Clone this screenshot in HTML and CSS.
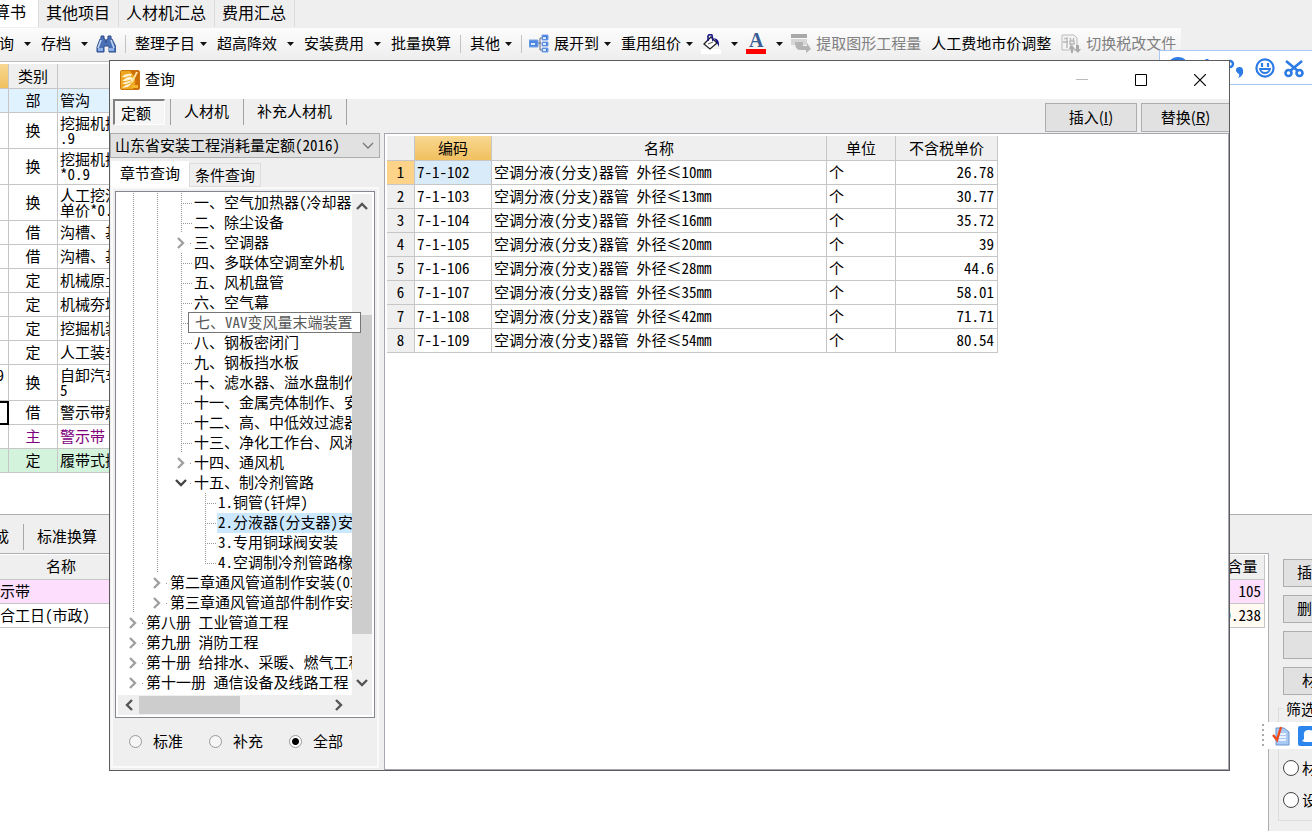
FILE: index.html
```
<!DOCTYPE html>
<html lang="zh-CN">
<head>
<meta charset="utf-8">
<title>查询</title>
<link rel="stylesheet" href="styles.css">
</head>
<body>
<svg class="defs" aria-hidden="true">
  <symbol id="caret" viewBox="0 0 7 4"><path d="M0 0h7L3.5 4z" fill="#111"/></symbol>
  <symbol id="chev" viewBox="0 0 12 12"><path d="M3 1l5 5-5 5" fill="none" stroke="currentColor" stroke-width="2.4"/></symbol>
</svg>
<div class="app">
  <nav class="tabs">
    <button class="tab tab-on">预算书</button>
    <button class="tab">其他项目</button>
    <button class="tab">人材机汇总</button>
    <button class="tab">费用汇总</button>
  </nav>
  <div class="toolbar">
    <button class="tool tool-cut wide"><span>查询</span><svg class="caret"><use href="#caret"/></svg></button>
    <button class="tool wide"><span>存档</span><svg class="caret"><use href="#caret"/></svg></button>
    <button class="tool bare" aria-label="查找"><svg class="ico" viewBox="0 0 20 20"><path d="M4 5h1V2h3v3h1l1 4 1-4h1V2h3v3h1l4 8v5h-7v-6H8v6H1v-5z" fill="#4a70b6" stroke="#2c4c8c"/><path d="M5 6l-3 8M15 6l3 8" stroke="#c3d5f3" stroke-width="1.6"/><path d="M2 14h5v3H2zM13 14h5v3h-5z" fill="#8fb0e6"/></svg></button>
    <i class="sep"></i>
    <button class="tool"><span>整理子目</span><svg class="caret"><use href="#caret"/></svg></button>
    <button class="tool wide"><span>超高降效</span><svg class="caret"><use href="#caret"/></svg></button>
    <button class="tool wide"><span>安装费用</span><svg class="caret"><use href="#caret"/></svg></button>
    <button class="tool"><span>批量换算</span></button>
    <i class="sep"></i>
    <button class="tool"><span>其他</span><svg class="caret"><use href="#caret"/></svg></button>
    <i class="sep"></i>
    <button class="tool bare"><svg class="ico" viewBox="0 0 20 20"><path d="M8 9h4M11 4v12M11 4h3M11 16h3" stroke="#667" fill="none"/><path d="M0 6h9v7H0z" fill="#4c86e0" stroke="#7aa5ea"/><path d="M13 1h6v5h-6zM13 8h6v4h-6zM13 14h6v4h-6z" fill="#3f78d8" stroke="#7aa5ea"/><path d="M2 9h4v2H2zM14 3h3v2h-3zM14 9h3v2h-3zM14 15h3v2h-3z" fill="#dceaff"/></svg><span>展开到</span><svg class="caret"><use href="#caret"/></svg></button>
    <button class="tool"><span>重用组价</span><svg class="caret"><use href="#caret"/></svg></button>
    <button class="tool wide bare" aria-label="填充颜色"><svg class="ico" viewBox="0 0 20 20"><path d="M0 15h20v5H0z" fill="#fff"/><path d="M10 3l6 6-7 6-6-5z" fill="#fff" stroke="#222" stroke-width="1.3"/><path d="M7 7V2q1-2 4-1l1 6" fill="none" stroke="#1a1a8c" stroke-width="1.6"/><path d="M13 4q6 1 5 9l-2-4z" fill="#10108a"/><path d="M7 10l5-2" stroke="#555"/></svg><svg class="caret"><use href="#caret"/></svg></button>
    <button class="tool wide bare" aria-label="字体颜色"><span class="letter">A</span><svg class="caret"><use href="#caret"/></svg></button>
    <button class="tool bare" disabled><svg class="ico" viewBox="0 0 20 20"><path d="M0 0h16v4H0z" fill="#a9a9a9"/><path d="M0 5h16v6H0z" fill="#d6d6d6"/><path d="M4 8h8v4h4V9l4 6-5 4v-3H9q-5 0-5-8z" fill="#b4b4b4"/></svg><span>提取图形工程量</span></button>
    <button class="tool"><span>人工费地市价调整</span></button>
    <button class="tool" disabled><svg class="ico" viewBox="0 0 20 20"><path d="M1 1h12l3 3v12H1z" fill="#f4f4f4" stroke="#bbb"/><path d="M3 5l3-1v10M2 8h5M9 4l1 2M13 4l-1 2M9 7h4v3H9zM10 10l-1 5" fill="none" stroke="#b5b5b5" stroke-width="1.300"/><path d="M10 19v-4H8l3-4 3 4h-2v4zM15 11h3v4h2l-3 4-4-4h2z" fill="#aaa"/></svg><span>切换税改文件</span></button>
  </div>

  <main class="sheet">
    <table class="grid list">
      <colgroup><col class="c-code"><col class="c-kind"><col class="c-name"></colgroup>
      <thead><tr><th class="gold"></th><th>类别</th><th></th></tr></thead>
      <tbody>
        <tr class="blue"><td></td><td>部</td><td>管沟</td></tr>
        <tr class="tall"><td></td><td>换</td><td>挖掘机挖沟槽<br>.9</td></tr>
        <tr class="tall"><td></td><td>换</td><td>挖掘机挖沟槽<br>*0.9</td></tr>
        <tr class="tall"><td></td><td>换</td><td>人工挖沟槽<br>单价*0.9</td></tr>
        <tr><td></td><td>借</td><td>沟槽、基坑</td></tr>
        <tr><td></td><td>借</td><td>沟槽、基坑</td></tr>
        <tr><td></td><td>定</td><td>机械原土夯实</td></tr>
        <tr><td></td><td>定</td><td>机械夯填</td></tr>
        <tr><td></td><td>定</td><td>挖掘机装车</td></tr>
        <tr><td></td><td>定</td><td>人工装车</td></tr>
        <tr class="tall"><td class="code"><span>9</span><br>&nbsp;</td><td>换</td><td>自卸汽车运土<br>5</td></tr>
        <tr><td class="focus"></td><td>借</td><td>警示带敷设</td></tr>
        <tr class="purple"><td></td><td>主</td><td>警示带</td></tr>
        <tr class="green"><td></td><td>定</td><td>履带式挖掘机</td></tr>
      </tbody>
    </table>
  </main>

  <section class="lower">
    <div class="detail">
      <nav class="subtabs"><button class="subtab subtab-cut">组成</button><button class="subtab">标准换算</button></nav>
      <div class="detail-box">
        <table class="grid parts">
          <colgroup><col class="c-part"><col><col class="c-qty"></colgroup>
          <thead><tr><th>名称</th><th></th><th>含量</th></tr></thead>
          <tbody>
            <tr class="pink"><td><span class="from-left">警示带</span></td><td></td><td class="num">105</td></tr>
            <tr class="cream"><td><span class="from-left">综合工日(市政)</span></td><td></td><td class="num">0.238</td></tr>
          </tbody>
        </table>
      </div>
    </div>
    <aside class="side">
      <button class="push">插入</button>
      <button class="push">删除</button>
      <button class="push" aria-label="查询"></button>
      <button class="push push-in">材料</button>
      <fieldset class="filter">
        <legend>筛选</legend>
        <label><input type="radio" name="f" class="big-radio">材料</label>
        <label><input type="radio" name="f" class="big-radio">设备</label>
      </fieldset>
    </aside>
  </section>
</div>

<div class="ime">
  <svg class="ime-logo" viewBox="0 0 24 24"><circle cx="12" cy="12" r="12" fill="#2d7be5"/></svg>
  <svg class="ime-ico" viewBox="0 0 22 22"><path d="M11 2v8" stroke="#2d7be5" stroke-width="3"/></svg>
  <svg class="ime-ico" viewBox="0 0 22 22"><circle cx="5" cy="7" r="3" fill="none" stroke="#2d7be5" stroke-width="2.400"/><path d="M11 14a3.500 3.500 0 1 1 7-1q1 6-5 8 2-2 1-4-2-1-3-3z" fill="#2d7be5"/></svg>
  <svg class="ime-ico" viewBox="0 0 22 22"><circle cx="11" cy="11" r="8.600" fill="none" stroke="#2d7be5" stroke-width="2.200"/><path d="M8 6v4M14 6v4" stroke="#2d7be5" stroke-width="2.200"/><path d="M6 12h10q-1 4-5 4t-5-4z" fill="none" stroke="#2d7be5" stroke-width="1.800"/></svg>
  <svg class="ime-ico" viewBox="0 0 22 22"><g fill="none" stroke="#2d7be5" stroke-width="2.600"><path d="M3 4l12 10M19 4L7 14"/><circle cx="5.500" cy="16" r="3"/><circle cx="16.500" cy="16" r="3"/></g></svg>
</div>

<div class="float">
  <i class="grip"></i>
  <svg class="float-ico" viewBox="0 0 20 20"><path d="M5 2h8l5 4v13H5z" fill="#a9c9f5" stroke="#6b93cf"/><path d="M8 8h7M8 11h7M8 14h7" stroke="#fff" stroke-width="1.500"/><path d="M2 9l4 5 4-13" fill="none" stroke="#f04a1c" stroke-width="2.400"/></svg>
  <svg class="float-ico" viewBox="0 0 20 20"><rect width="20" height="20" rx="2" fill="#2d86ee"/><path d="M6 10q-1-6 5-6t6 6v3l1 2-3 1H7l-3-1 2-2z" fill="#fff"/></svg>
</div>

<div class="dialog" role="dialog" aria-label="查询">
  <header class="title">
    <svg class="title-ico" viewBox="0 0 20 20"><rect x=".5" y=".5" width="19" height="19" rx="1.500" fill="#eda61e" stroke="#c8780a"/><path d="M10 1h9v18h-6q6-9-3-18z" fill="#cf6d08"/><path d="M2 7q3-4 10-3l-2 3 3 1-1 3-2 1 1 2-3 3-6 1q3-2 4-4H2l4-3H2l4-3z" fill="#fff3cf"/><path d="M4 8l6-2M4 12l7-2M5 15l5-2" stroke="#f0a830"/><path d="M18 2l-5 10-2 2 1-4 4-8z" fill="#ffe9a8"/><path d="M12 15h6v3h-6z" fill="#f5b62e"/></svg>
    <h1>查询</h1>
    <button class="win" aria-label="最小化"><svg viewBox="0 0 12 12"><path d="M0 5.500h12" stroke="#bbb"/></svg></button>
    <button class="win" aria-label="最大化"><svg viewBox="0 0 12 12"><path d="M.5.5h11v11H.5z" fill="none" stroke="#000"/></svg></button>
    <button class="win" aria-label="关闭"><svg viewBox="0 0 12 12"><path d="M0 0l12 12M12 0L0 12" stroke="#000" stroke-width="1.200"/></svg></button>
  </header>
  <div class="modes">
    <button class="mode mode-on">定额</button>
    <button class="mode">人材机</button>
    <button class="mode">补充人材机</button>
    <span class="grow"></span>
    <button class="act">插入(<u>I</u>)</button>
    <button class="act act-end">替换(<u>R</u>)</button>
  </div>
  <div class="body">
    <div class="left">
      <select class="book" aria-label="定额库"><option>山东省安装工程消耗量定额(2016)</option></select>
      <nav class="ptabs"><button class="ptab ptab-on">章节查询</button><button class="ptab">条件查询</button></nav>
      <div class="page">
        <div class="treebox">
          <ul class="tree">
            <li><i class="g"></i><i class="g"></i><i class="g b"></i><span>一、空气加热器(冷却器)安装</span></li>
            <li><i class="g"></i><i class="g"></i><i class="g b"></i><span>二、除尘设备</span></li>
            <li><i class="g"></i><i class="g"></i><i class="a"><svg><use href="#chev"/></svg></i><span>三、空调器</span></li>
            <li><i class="g"></i><i class="g"></i><i class="g b"></i><span>四、多联体空调室外机</span></li>
            <li><i class="g"></i><i class="g"></i><i class="g b"></i><span>五、风机盘管</span></li>
            <li><i class="g"></i><i class="g"></i><i class="g b"></i><span>六、空气幕</span></li>
            <li><i class="g"></i><i class="g"></i><i class="g b"></i><span class="tip">七、VAV变风量末端装置</span></li>
            <li><i class="g"></i><i class="g"></i><i class="g b"></i><span>八、钢板密闭门</span></li>
            <li><i class="g"></i><i class="g"></i><i class="g b"></i><span>九、钢板挡水板</span></li>
            <li><i class="g"></i><i class="g"></i><i class="g b"></i><span>十、滤水器、溢水盘制作安装</span></li>
            <li><i class="g"></i><i class="g"></i><i class="g b"></i><span>十一、金属壳体制作、安装</span></li>
            <li><i class="g"></i><i class="g"></i><i class="g b"></i><span>十二、高、中低效过滤器安装</span></li>
            <li><i class="g"></i><i class="g"></i><i class="g b"></i><span>十三、净化工作台、风淋室</span></li>
            <li><i class="g"></i><i class="g"></i><i class="a"><svg><use href="#chev"/></svg></i><span>十四、通风机</span></li>
            <li><i class="g"></i><i class="g"></i><i class="a open"><svg><use href="#chev"/></svg></i><span>十五、制冷剂管路</span></li>
            <li><i class="g"></i><i class="g"></i><i class="n"></i><i class="g b"></i><span>1.铜管(钎焊)</span></li>
            <li><i class="g"></i><i class="g"></i><i class="n"></i><i class="g b"></i><span class="sel">2.分液器(分支器)安装</span></li>
            <li><i class="g"></i><i class="g"></i><i class="n"></i><i class="g b"></i><span>3.专用铜球阀安装</span></li>
            <li><i class="g"></i><i class="g"></i><i class="n"></i><i class="g b end"></i><span>4.空调制冷剂管路橡塑保温</span></li>
            <li><i class="g"></i><i class="a"><svg><use href="#chev"/></svg></i><span>第二章通风管道制作安装(030702)</span></li>
            <li><i class="g"></i><i class="a"><svg><use href="#chev"/></svg></i><span>第三章通风管道部件制作安装</span></li>
            <li><i class="a"><svg><use href="#chev"/></svg></i><span>第八册 工业管道工程</span></li>
            <li><i class="a"><svg><use href="#chev"/></svg></i><span>第九册 消防工程</span></li>
            <li><i class="a"><svg><use href="#chev"/></svg></i><span>第十册 给排水、采暖、燃气工程</span></li>
            <li><i class="a"><svg><use href="#chev"/></svg></i><span>第十一册 通信设备及线路工程</span></li>
          </ul>
          <div class="vbar"><svg class="up"><use href="#chev"/></svg><div class="track"><i class="thumb"></i></div><svg class="down"><use href="#chev"/></svg></div>
          <div class="hbar"><svg class="back"><use href="#chev"/></svg><div class="track"><i class="thumb"></i></div><svg><use href="#chev"/></svg></div>
        </div>
        <div class="radios">
          <label><input type="radio" name="src" class="radio">标准</label>
          <label><input type="radio" name="src" class="radio">补充</label>
          <label><input type="radio" name="src" class="radio" checked>全部</label>
        </div>
      </div>
    </div>
    <div class="right">
      <table class="grid result">
        <colgroup><col class="r-no"><col class="r-code"><col class="r-name"><col class="r-unit"><col class="r-price"></colgroup>
        <thead><tr><th></th><th class="gold">编码</th><th>名称</th><th>单位</th><th>不含税单价</th></tr></thead>
        <tbody>
          <tr class="on"><th>1</th><td>7-1-102</td><td>空调分液(分支)器管 外径≤10mm</td><td>个</td><td class="num">26.78</td></tr>
          <tr><th>2</th><td>7-1-103</td><td>空调分液(分支)器管 外径≤13mm</td><td>个</td><td class="num">30.77</td></tr>
          <tr><th>3</th><td>7-1-104</td><td>空调分液(分支)器管 外径≤16mm</td><td>个</td><td class="num">35.72</td></tr>
          <tr><th>4</th><td>7-1-105</td><td>空调分液(分支)器管 外径≤20mm</td><td>个</td><td class="num">39</td></tr>
          <tr><th>5</th><td>7-1-106</td><td>空调分液(分支)器管 外径≤28mm</td><td>个</td><td class="num">44.6</td></tr>
          <tr><th>6</th><td>7-1-107</td><td>空调分液(分支)器管 外径≤35mm</td><td>个</td><td class="num">58.01</td></tr>
          <tr><th>7</th><td>7-1-108</td><td>空调分液(分支)器管 外径≤42mm</td><td>个</td><td class="num">71.71</td></tr>
          <tr><th>8</th><td>7-1-109</td><td>空调分液(分支)器管 外径≤54mm</td><td>个</td><td class="num">80.54</td></tr>
        </tbody>
      </table>
    </div>
  </div>
</div>
</body>
</html>
```
FILE: styles.css
```
* { box-sizing: border-box; }
html, body { height: 100%; }
body, button, select, input {
  font: 15px/20px "Noto Sans CJK SC", sans-serif;
  font-feature-settings: "hwid";
  color: #000;
}
body { margin: 0; overflow: hidden; background: #fff; position: relative; }
button { border: 0; padding: 0; margin: 0; background: none; white-space: nowrap; }
i { font-style: normal; }
.defs { position: absolute; width: 0; height: 0; }
.grow { flex: 1; }

.app { height: 100%; display: flex; flex-direction: column; }

/* main tabs */
.tabs { display: flex; height: 28px; flex: none; background: #efefef; padding-bottom: 1px; }
.tab { font-size: 16px; padding: 0 8px 3px 7px; border-right: 1px solid #dcdcdc; }
.tab-on { width: 39px; padding: 0 12px 5px 0; background: #fff; display: flex; align-items: center; justify-content: flex-end; overflow: hidden; }

/* toolbar */
.toolbar { display: flex; align-items: center; height: 33px; flex: none; padding-bottom: 2px; background: linear-gradient(90deg, transparent 1181px, #efefef 1181px), linear-gradient(#fcfcfc, #ededed); }
.tool { display: flex; align-items: center; gap: 5px; height: 31px; padding: 0 5px; flex: none; }
.tool > span { padding-bottom: 2px; }
.tool.wide { gap: 10px; }
.tool.bare { padding-left: 3px; }
.tool:disabled { color: #808080; }
.tool-cut { width: 36px; padding-left: 0; justify-content: flex-end; overflow: hidden; }
.caret { width: 7px; height: 4px; flex: none; }
.ico { width: 20px; height: 20px; flex: none; }
.sep { width: 1px; height: 18px; margin: 0 4px; background: #c4c4c4; flex: none; }
.tool > .letter { width: 20px; height: 21px; padding: 0; border-bottom: 5px solid #f00; font: bold 20px/15px "Liberation Serif", serif; color: #3c5c94; text-align: center; }

/* shared data grid */
.grid { border-collapse: separate; border-spacing: 0; table-layout: fixed; }
.grid th { font-weight: 400; background: #efefef; }
.grid th, .grid td { height: 24px; padding: 0 2px 2px; border: 1px solid #c6c6c6; border-width: 0 1px 1px 0; white-space: nowrap; overflow: hidden; line-height: 15px; text-align: left; }
.grid thead th { height: 25px; text-align: center; }
.grid td.num { text-align: right; padding-right: 3px; }
.grid .gold { background: linear-gradient(#f9d892, #f1c05f); }

.sheet { flex: 452 1 0; min-height: 0; overflow: hidden; padding-top: 2px; border-top: 1px solid #bcbcbc; }
.list { width: 358px; }
.c-code { width: 9px; }
.c-kind { width: 49px; }
.c-name { width: 300px; }
.list .tall td { height: 36px; }
.list td:nth-child(2) { text-align: center; }
.list .blue td { background: #e1f2ff; }
.list .green td { background: #d3f3dc; }
.list .purple td { color: #80007c; }
.list .focus { border: 2px solid #000; border-left: 0; }
.list .code { direction: rtl; padding-right: 5px; }

/* lower pane */
.lower { flex: 318 1 0; min-height: 0; display: flex; background: #efefef; border-top: 1px solid #aeaeb4; }
.detail { flex: 1; min-width: 0; display: flex; flex-direction: column; }
.subtabs { display: flex; height: 38px; flex: none; padding: 9px 0 3px; }
.subtab { padding: 0 13px 2px; }
.subtab-cut { width: 24px; padding: 0 14px 2px 0; border-right: 1px solid #a8a8a8; display: flex; align-items: center; justify-content: flex-end; overflow: hidden; }
.detail-box { flex: 1; background: #fff; border: 1px solid #aeaeb4; border-width: 1px 1px 0 0; padding: 1px 3px 0 0; }
.parts { width: 100%; }
.c-part { width: 123px; }
.c-qty { width: 44px; }
.parts .pink td { background: #fddffd; }
.parts .cream td:last-child { background: #fffaf2; }
.grid.parts td { padding-left: 0; }
.from-left { display: flex; justify-content: flex-end; }
.pink .from-left { width: 30px; }
.cream .from-left { width: 90px; }

.side { width: 43px; flex: none; overflow: hidden; display: flex; flex-direction: column; align-items: flex-start; gap: 8px; padding: 44px 0 10px 14px; }
.push { width: 92px; height: 28px; flex: none; background: #e1e1e1; border: 1px solid #adadad; padding: 0 13px 2px; text-align: left; }
.push-in { padding-left: 18px; }
.filter { margin: -4px 0 0 -5px; width: 120px; flex: 1; border: 1px solid #dcdcdc; padding: 39px 4px 0; display: flex; flex-direction: column; gap: 12px; }
.filter legend { padding: 0 3px; }
.filter label { display: flex; align-items: center; gap: 3px; white-space: nowrap; }
.big-radio { appearance: none; width: 16px; height: 16px; flex: none; margin: 0; border: 1px solid #444; border-radius: 50%; background: #fff; }

/* floating input bars */
.ime { position: absolute; top: 50px; right: -8px; height: 35px; width: 161px; display: flex; align-items: center; gap: 7px; padding-left: 7px; background: #fff; border: 1px solid #a8c8f2; }
.ime-logo { width: 22px; height: 22px; flex: none; }
.ime-ico { width: 22px; height: 22px; flex: none; }
.float { position: absolute; top: 722px; right: -8px; height: 27px; width: 60px; display: flex; align-items: center; gap: 7px; padding-left: 2px; background: #fff; }
.grip { width: 2px; height: 24px; flex: none; background: repeating-linear-gradient(#aaa 0 2px, transparent 2px 5px); }
.float-ico { width: 20px; height: 20px; flex: none; }

/* query dialog */
.dialog { position: absolute; left: 109px; right: 82px; top: 60px; bottom: 60px; display: flex; flex-direction: column; background: #efefef; border: 1px solid #5c5c5c; overflow: hidden; }
.title { display: flex; align-items: center; height: 38px; flex: none; background: #fff; padding-left: 10px; }
.title-ico { width: 20px; height: 20px; margin-right: 5px; }
.title h1 { font-size: 15px; font-weight: 400; margin: 0; padding-bottom: 2px; flex: 1; }
.win { width: 59px; height: 36px; display: flex; align-items: center; justify-content: center; }
.win svg { width: 12px; height: 12px; }

.modes { display: flex; align-items: flex-start; height: 34px; flex: none; padding-left: 3px; }
.mode { height: 26px; padding: 0 14px 2px 13px; border-right: 1px solid #a2a2a2; }
.mode-on { width: 52px; padding: 0 6px; margin-right: 5px; border: 1px solid #fff; border-top: 2px solid #808080; border-left: 2px solid #808080; background: #f6f6f6; text-align: left; }
.mode-on + .mode { border-left: 1px solid #a2a2a2; }
.act { width: 92px; height: 29px; margin: 4px 4px 0 0; padding-bottom: 1px; background: #e1e1e1; border: 1px solid #adadad; font-feature-settings: normal; }
.act-end { width: 88px; margin-right: 0; border-right: 0; }

.body { flex: 1; min-height: 0; display: flex; gap: 4px; }
.left { width: 270px; flex: none; display: flex; flex-direction: column; }
.book { appearance: none; height: 25px; flex: none; padding: 0 4px 2px; border: 1px solid #adadad; border-radius: 0; background: #e1e1e1 url("data:image/svg+xml,%3Csvg xmlns='http://www.w3.org/2000/svg' width='12' height='8'%3E%3Cpath d='M1 1l5 5 5-5' fill='none' stroke='%23777' stroke-width='1.3'/%3E%3C/svg%3E") no-repeat right 5px center; }
.ptabs { display: flex; align-items: flex-end; height: 29px; flex: none; padding: 3px 0 0 1px; }
.ptab { height: 24px; padding: 0 5px 1px; border: 1px solid #dcdcdc; }
.ptab-on { height: 26px; padding: 0 9px 3px; border: 0; background: #fff; }
.page { flex: 1; min-height: 0; display: flex; flex-direction: column; margin: 0 1px 2px 1px; border: 2px solid #fafafa; padding: 2px; }

.treebox { flex: 1; min-height: 0; display: grid; grid-template: 1fr 22px / 1fr 22px; background: #fff; border: 1px solid #828790; }
.tree { list-style: none; margin: 0; padding: 1px 0 0 5px; min-width: 0; min-height: 0; }
.tree li { display: flex; height: 20px; position: relative; }
.tree li > span { flex: 1; min-width: 0; padding-left: 1px; line-height: 18px; white-space: nowrap; overflow: hidden; }
.tree i { width: 24px; flex: none; position: relative; }
.tree .g { background: repeating-linear-gradient(#999 0 1px, transparent 1px 2px) 12px 0 / 1px 100% no-repeat; }
.tree .g.b { background: repeating-linear-gradient(#999 0 1px, transparent 1px 2px) 12px 0 / 1px 100% no-repeat, repeating-linear-gradient(90deg, #999 0 1px, transparent 1px 2px) 12px 10px / 11px 1px no-repeat; }
.tree .g.b.end { background-size: 1px 11px, 11px 1px; }
.tree .a { display: flex; align-items: center; justify-content: center; color: #a0a0a0; background: linear-gradient(#999, #999) 21px 10px / 1px 1px no-repeat; }
.tree .a svg { width: 12px; height: 12px; }
.tree .open svg { transform: rotate(90deg); color: #444; }
.tree .sel { background: #cce8ff; }
/* full label of a clipped node, shown over the scroll bar */
.tree li > .tip { position: absolute; left: 67px; top: -1px; height: 21px; padding: 0 7px 0 6px; line-height: 18px; background: #fff; border: 1px solid #767676; color: #575757; z-index: 1; }
.vbar, .hbar { display: flex; align-items: center; background: #efefef; color: #555; }
.vbar { flex-direction: column; padding: 6px 0; margin: 2px 2px 0 0; }
.hbar { grid-column: 1 / -1; padding: 0 27px 0 5px; margin: 0 2px 2px; }
.vbar svg, .hbar svg { width: 12px; height: 12px; flex: none; }
.up { transform: rotate(-90deg); }
.down { transform: rotate(90deg); }
.back { transform: rotate(180deg); }
.vbar .track { flex: 1; width: 100%; display: flex; flex-direction: column; padding: 103px 0 43px; }
.vbar .thumb { flex: 1; background: #cdcdcd; }
.hbar .track { flex: 1; height: 18px; padding: 0 93px 0 4px; display: flex; }
.hbar .thumb { flex: 1; background: #cdcdcd; }

.radios { display: flex; height: 46px; flex: none; align-items: center; gap: 26px; padding-left: 14px; }
.radios label { display: flex; align-items: center; gap: 11px; }
.radio { appearance: none; width: 13px; height: 13px; margin: 0; border: 1px solid #999; border-radius: 50%; background: #f6f6f6; }
.radio:checked { background: radial-gradient(circle, #000 0 3px, #fff 4px); }

.right { flex: 1; min-width: 0; background: #fff; border: 1px solid #a5a8b0; padding: 2px 0 0 2px; }
.r-no { width: 28px; }
.r-code { width: 77px; }
.r-name { width: 335px; }
.r-unit { width: 69px; }
.r-price { width: 102px; }
.result { width: 611px; }
.result tbody th { text-align: center; }
.result .on th { background: #fdd38a; }
.result .on td:nth-child(2) { background: #d9eaf8; }
```
